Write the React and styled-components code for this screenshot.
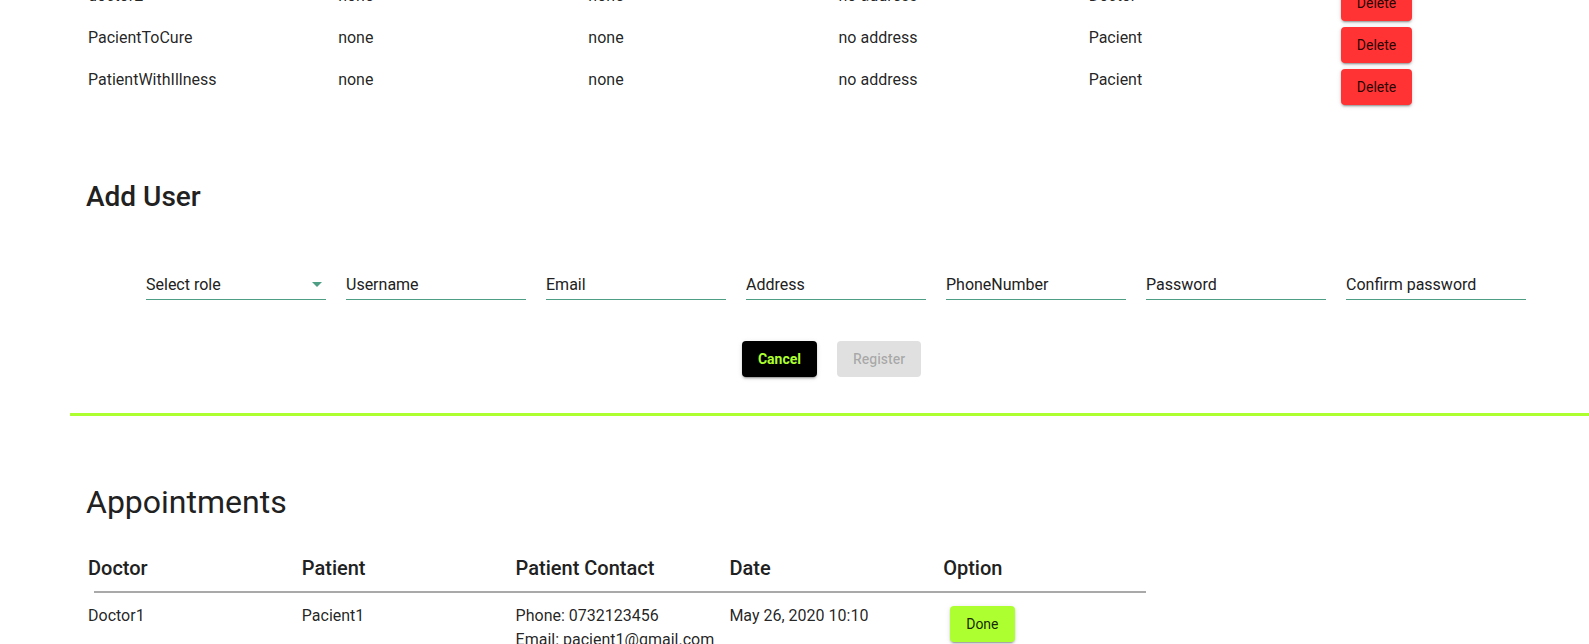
import styled, { createGlobalStyle } from 'styled-components';

const GlobalStyle = createGlobalStyle`
	html, body {
		margin: 0;
		overflow: hidden;
		background: #fff;
	}
	body {
		font-family: Roboto, 'Liberation Sans', sans-serif;
		color: rgba(0, 0, 0, 0.87);
	}
`;

const users = [
	{ name: 'doctor2', phone: 'none', email: 'none', address: 'no address', role: 'Doctor' },
	{ name: 'PacientToCure', phone: 'none', email: 'none', address: 'no address', role: 'Pacient' },
	{ name: 'PatientWithIllness', phone: 'none', email: 'none', address: 'no address', role: 'Pacient' },
];

const fields = ['Username', 'Email', 'Address', 'PhoneNumber', 'Password', 'Confirm password'];

const appointments = [
	{
		doctor: 'Doctor1',
		patient: 'Pacient1',
		phone: '0732123456',
		email: 'pacient1@gmail.com',
		date: 'May 26, 2020 10:10',
	},
];

const Main = styled.main`
	margin-left: 70px;
	display: flex;
	flex-direction: column;
`;

// таблица пользователей (страница прокручена, видна только нижняя часть)
const UsersTable = styled.div`
	margin-top: -16px;
	padding-left: 18px;
`;

const UserRow = styled.div`
	display: grid;
	grid-template-columns: repeat(6, 1fr);
	align-items: start;
	height: 42px;
`;

const Cell = styled.div`
	font-size: 16px;
	line-height: 24px;
	white-space: nowrap;
`;

const Button = styled.button`
	font-family: Roboto, 'Liberation Sans', sans-serif;
	font-size: 14px;
	font-weight: 400;
	line-height: 24px;
	height: 36px;
	min-width: 64px;
	padding: 6px 16px;
	border: 0;
	border-radius: 4px;
	cursor: pointer;
	box-sizing: border-box;
	color: rgba(0, 0, 0, 0.87);
	box-shadow: 0 3px 1px -2px rgba(0, 0, 0, 0.2), 0 2px 2px 0 rgba(0, 0, 0, 0.14),
		0 1px 5px 0 rgba(0, 0, 0, 0.12);
`;

const DeleteButton = styled(Button)`
	justify-self: start;
	margin: 1px 0 0 2px;
	background: #ff3333;
`;

const SectionTitle = styled.h2`
	margin: 70px 0 0;
	padding-left: 16px;
	font-size: 28px;
	font-weight: 500;
	line-height: 34px;
	color: #212121;
`;

const FormRow = styled.div`
	display: flex;
	gap: 20px;
	margin-top: 55px;
	padding-left: 76px;
`;

const Field = styled.input`
	width: 180px;
	height: 31px;
	box-sizing: border-box;
	padding: 6px 0 5px;
	border: 0;
	border-bottom: 1px solid #4d9e84;
	background: transparent;
	font-family: Roboto, 'Liberation Sans', sans-serif;
	font-size: 16px;
	line-height: 19px;
	color: #212121;
	outline: none;

	&::placeholder {
		color: #212121;
		opacity: 1;
	}
`;

const SelectField = styled.div`
	width: 180px;
	height: 31px;
	box-sizing: border-box;
	padding: 6px 4px 5px 0;
	border-bottom: 1px solid #4d9e84;
	display: flex;
	align-items: center;
	justify-content: space-between;
	font-size: 16px;
	line-height: 19px;
	color: #212121;
	cursor: pointer;
`;

const Actions = styled.div`
	display: flex;
	justify-content: center;
	gap: 20px;
	margin-top: 41px;
	padding-left: 4px;
`;

const ActionButton = styled(Button)`
	background: ${(props) => (props.$primary ? '#000' : 'rgba(0, 0, 0, 0.12)')};
	color: ${(props) => (props.$primary ? '#adff2f' : 'rgba(0, 0, 0, 0.26)')};
	font-weight: ${(props) => (props.$primary ? 700 : 500)};
	box-shadow: ${(props) => (props.$primary ? undefined : 'none')};
	cursor: ${(props) => (props.$primary ? 'pointer' : 'default')};
`;

const GreenLine = styled.div`
	margin-top: 36px;
	height: 3px;
	background: #adff2f;
`;

const PageTitle = styled.h1`
	margin: 67px 0 0;
	padding-left: 16px;
	font-size: 32px;
	font-weight: 400;
	line-height: 38px;
	color: #212121;
`;

const ApptTable = styled.div`
	margin: 31px 0 0 18px;
	width: 1069px;
`;

const ApptRow = styled.div`
	display: grid;
	grid-template-columns: repeat(5, 1fr);
	align-items: start;
	margin-top: ${(props) => (props.$head ? 0 : '11px')};
`;

const HeadCell = styled.div`
	font-size: 20px;
	font-weight: 500;
	line-height: 32px;
	color: #212121;
`;

const Rule = styled.div`
	height: 2px;
	margin: 7px 11px 0 6px;
	background: #a9a9a9;
`;

const DoneButton = styled(Button)`
	justify-self: start;
	margin: 2px 0 0 7px;
	background: #adff2f;
`;

const ArrowDown = () => (
	<svg width="10" height="5" viewBox="0 0 10 5">
		<path d="M0 0l5 5 5-5z" fill="#4d9e84" />
	</svg>
);

export default function App() {
	return (
		<>
			<GlobalStyle />
			<Main>
				<UsersTable>
					{users.map((user) => (
						<UserRow key={user.name}>
							<Cell>{user.name}</Cell>
							<Cell>{user.phone}</Cell>
							<Cell>{user.email}</Cell>
							<Cell>{user.address}</Cell>
							<Cell>{user.role}</Cell>
							<DeleteButton>Delete</DeleteButton>
						</UserRow>
					))}
				</UsersTable>

				<SectionTitle>Add User</SectionTitle>
				<FormRow>
					<SelectField>
						<span>Select role</span>
						<ArrowDown />
					</SelectField>
					{fields.map((field) => (
						<Field
							key={field}
							placeholder={field}
							type={field.includes('assword') ? 'password' : 'text'}
						/>
					))}
				</FormRow>
				<Actions>
					<ActionButton $primary>Cancel</ActionButton>
					<ActionButton disabled>Register</ActionButton>
				</Actions>

				<GreenLine />

				<PageTitle>Appointments</PageTitle>
				<ApptTable>
					<ApptRow $head>
						<HeadCell>Doctor</HeadCell>
						<HeadCell>Patient</HeadCell>
						<HeadCell>Patient Contact</HeadCell>
						<HeadCell>Date</HeadCell>
						<HeadCell>Option</HeadCell>
					</ApptRow>
					<Rule />
					{appointments.map((item) => (
						<ApptRow key={item.doctor + item.date}>
							<Cell>{item.doctor}</Cell>
							<Cell>{item.patient}</Cell>
							<Cell>
								Phone: {item.phone}
								<br />
								Email: {item.email}
							</Cell>
							<Cell>{item.date}</Cell>
							<DoneButton>Done</DoneButton>
						</ApptRow>
					))}
				</ApptTable>
			</Main>
		</>
	);
}
